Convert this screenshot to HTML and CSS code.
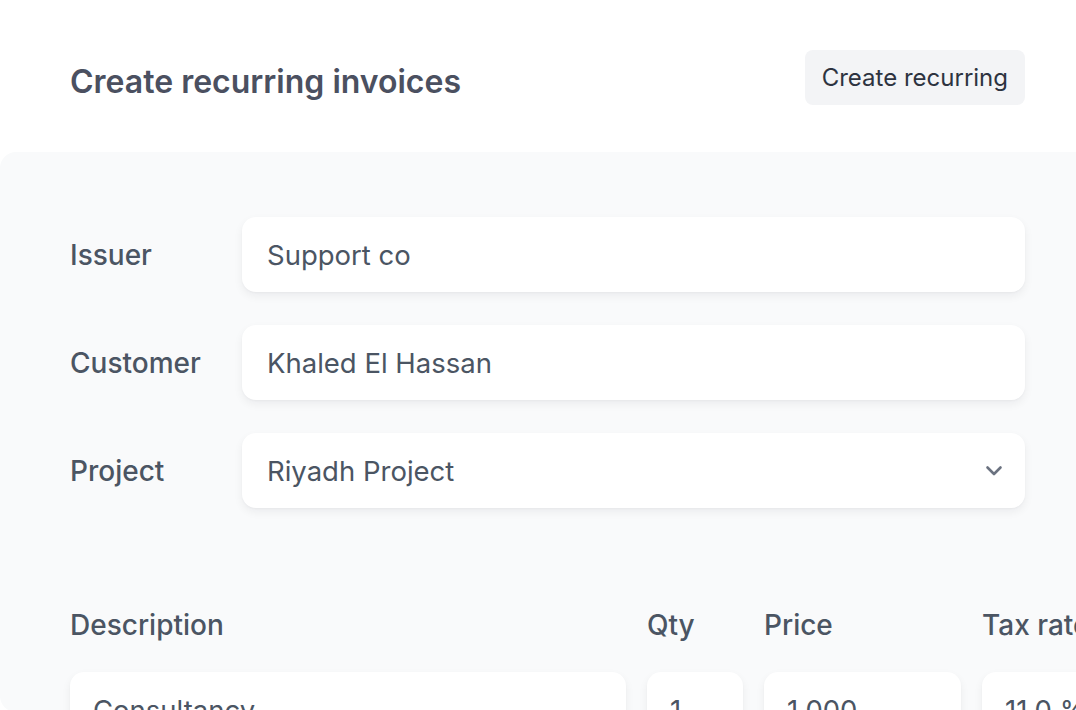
FILE: index.html
```html
<!DOCTYPE html>
<html lang="en">
<head>
  <meta charset="UTF-8" />
  <meta name="viewport" content="width=device-width, initial-scale=1.0" />
  <title>Create recurring invoices</title>
  <link rel="stylesheet" href="styles.css">
</head>
<body>
  <div class="page">
    <div class="header">
      <h1>Create recurring invoices</h1>
      <button class="btn-secondary">Create recurring</button>
    </div>

    <div class="panel">
      <div class="form-row">
        <label>Issuer</label>
        <div class="field">Support co</div>
      </div>
      <div class="form-row">
        <label>Customer</label>
        <div class="field">Khaled El Hassan</div>
      </div>
      <div class="form-row">
        <label>Project</label>
        <div class="field select">
          <span>Riyadh Project</span>
          <svg width="20" height="20" viewBox="0 0 20 20" fill="none">
            <path d="M3.5 6.5l6.5 6.5 6.5-6.5" stroke="#6b7280" stroke-width="2.6" stroke-linecap="round" stroke-linejoin="round"/>
          </svg>
        </div>
      </div>

      <div class="items">
        <div class="col-head">Description</div>
        <div class="col-head">Qty</div>
        <div class="col-head">Price</div>
        <div class="col-head">Tax rate</div>

        <div class="field cell">Consultancy</div>
        <div class="field cell">1</div>
        <div class="field cell">1,000</div>
        <div class="field cell">11.0 %</div>
      </div>
    </div>
  </div>
</body>
</html>
```

FILE: styles.css
```css
:root {
  --text: #4b5563;
  --panel-bg: #f9fafb;
  --field-bg: #ffffff;
  --btn-bg: #f3f4f6;
  --shadow: rgba(17, 24, 39, 0.06);
}

body {
  margin: 0;
  font-family: Inter, 'Noto Sans', sans-serif;
  background: #ffffff;
  color: var(--text);
  overflow: hidden;
}

.page {
  width: 1076px;
  height: 710px;
  overflow: hidden;
}

.header {
  display: flex;
  align-items: center;
  justify-content: space-between;
  height: 152px;
  padding: 0 51px 0 70px;
  box-sizing: border-box;
}

h1 {
  margin: 10px 0 0;
  font-size: 32px;
  font-weight: 600;
  color: #4b5060;
}

.btn-secondary {
  height: 55px;
  padding: 0 17px;
  margin-top: 3px;
  border: none;
  border-radius: 8px;
  background: var(--btn-bg);
  color: #2d3340;
  font-family: inherit;
  font-size: 24px;
  font-weight: 400;
}

.panel {
  background: var(--panel-bg);
  border-radius: 16px 0 0 16px;
  margin-right: -20px;
  padding: 65px 71px 0 70px;
  height: 560px;
  box-sizing: border-box;
}

.form-row {
  display: flex;
  align-items: center;
  margin-bottom: 33px;
}

.form-row label {
  width: 172px;
  font-size: 28px;
  font-weight: 500;
}

.field {
  background: var(--field-bg);
  border-radius: 14px;
  box-shadow: 0 4px 10px var(--shadow), 0 1px 2px rgba(17, 24, 39, 0.03);
  height: 75px;
  display: flex;
  align-items: center;
  padding: 0 25px;
  box-sizing: border-box;
  font-size: 27.5px;
  color: var(--text);
  white-space: nowrap;
}

.form-row .field {
  flex: 1;
}

.select {
  justify-content: space-between;
  padding-right: 21px;
}

.items {
  display: grid;
  grid-template-columns: 556px 96px 197px 140px;
  column-gap: 21px;
  margin-top: 100px;
  margin-right: -120px;
}

.col-head {
  font-size: 28px;
  font-weight: 500;
  height: 40px;
  margin-bottom: 24px;
  white-space: nowrap;
}

.cell {
  padding: 0 23px;
}
```
